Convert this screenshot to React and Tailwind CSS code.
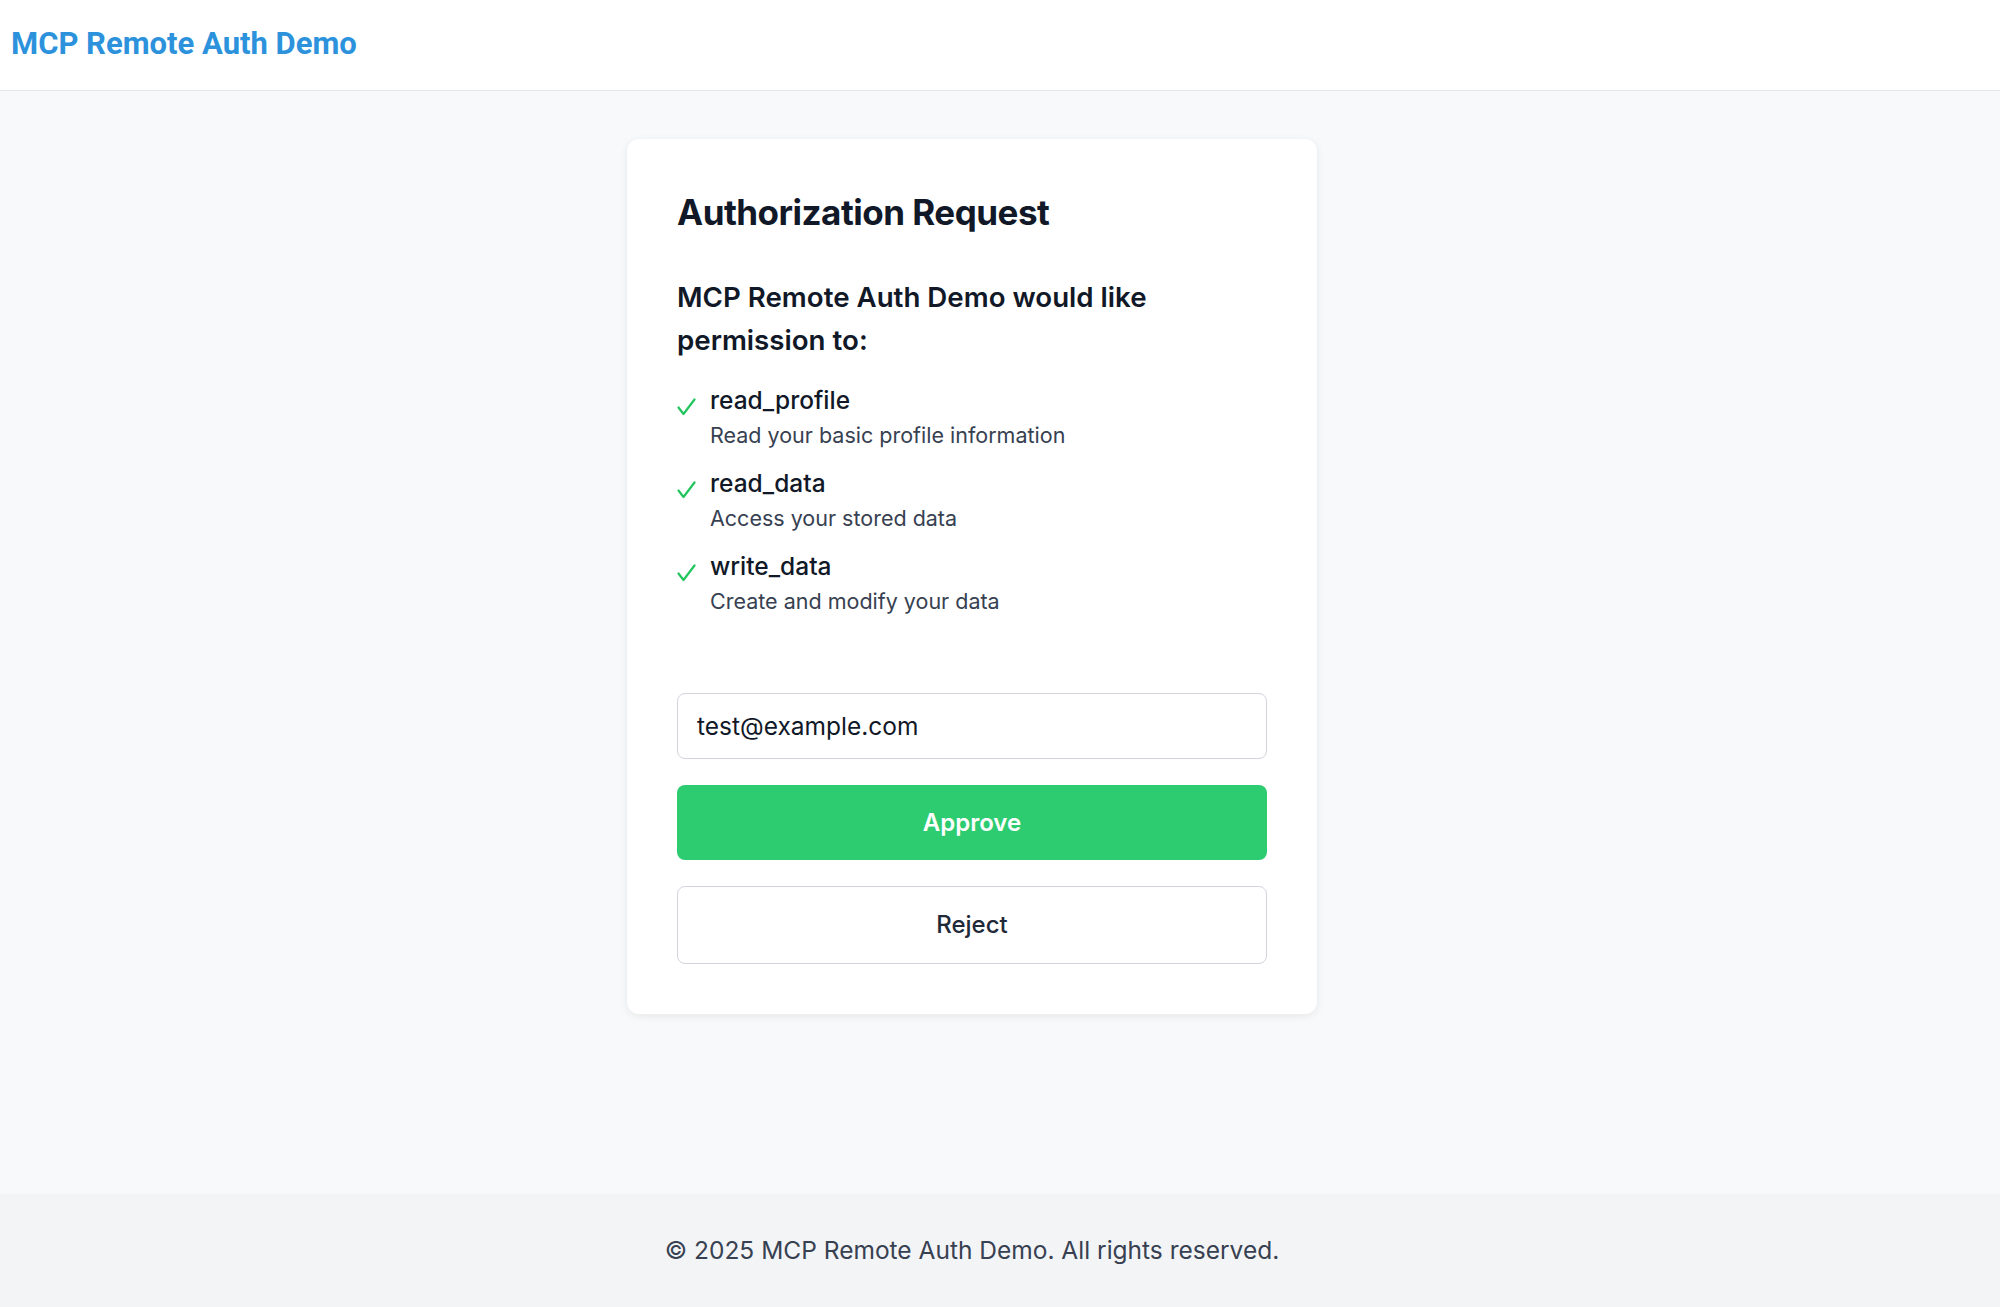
import React, { useState } from 'react';

const permissions = [
  { name: 'read_profile', desc: 'Read your basic profile information' },
  { name: 'read_data', desc: 'Access your stored data' },
  { name: 'write_data', desc: 'Create and modify your data' },
];

const CheckMark = () => (
  <svg width="19" height="18" viewBox="0 0 19 18" fill="none" className="shrink-0 mt-[16px]">
    <path d="M1.5 9.5 6.5 16 17.5 1.5" stroke="#22c55e" strokeWidth="2.2" strokeLinecap="round" strokeLinejoin="round" />
  </svg>
);

export default function App() {
  const [email, setEmail] = useState('test@example.com');

  return (
    <div className="min-h-[1307px] flex flex-col bg-[#f8f9fa] font-['Inter',sans-serif]">
      {/* 顶部栏 */}
      <header className="h-[91px] bg-white border-b border-[#e5e7eb] flex items-center px-[11px] pb-[2px]">
        <h1 className="font-['Roboto',sans-serif] font-bold text-[31px] text-[#2d92dc]">MCP Remote Auth Demo</h1>
      </header>

      <main className="flex-1 flex justify-center pt-[48px] pr-[56px]">
        <div className="w-[690px] h-fit bg-white rounded-[12px] shadow-[0_2px_8px_rgba(0,0,0,0.08)] p-[50px]">
          <h2 className="text-[35px] leading-[46px] font-bold text-[#111827] tracking-[-0.5px]">Authorization Request</h2>

          <p className="mt-[41px] text-[27.7px] leading-[43px] font-semibold text-[#111827] w-[520px]">
            MCP Remote Auth Demo would like permission to:
          </p>

          <ul className="mt-[20px] flex flex-col gap-[12px]">
            {permissions.map((p) => (
              <li key={p.name} className="flex gap-[14px]">
                <CheckMark />
                <div>
                  <div className="text-[24.5px] leading-[36px] font-medium text-[#111827]">{p.name}</div>
                  <div className="text-[21.5px] leading-[35px] text-[#374151]">{p.desc}</div>
                </div>
              </li>
            ))}
          </ul>

          <form className="mt-[74px] flex flex-col gap-[26px]" onSubmit={(e) => e.preventDefault()}>
            <input
              value={email}
              onChange={(e) => setEmail(e.target.value)}
              className="h-[66px] w-full px-[19px] text-[24.5px] text-[#111827] border border-[#d1d5db] rounded-[8px] bg-white focus:outline-none"
            />
            <button
              type="submit"
              className="h-[75px] w-full rounded-[8px] bg-[#2ecc71] text-white text-[24px] font-semibold"
            >
              Approve
            </button>
            <button
              type="button"
              className="h-[78px] w-full rounded-[8px] bg-white border border-[#d1d5db] text-[#1f2937] text-[24px] font-medium"
            >
              Reject
            </button>
          </form>
        </div>
      </main>

      <footer className="h-[113px] bg-[#f3f4f6] flex items-center justify-center pr-[56px]">
        <p className="text-[24.5px] text-[#374151]">© 2025 MCP Remote Auth Demo. All rights reserved.</p>
      </footer>
    </div>
  );
}
